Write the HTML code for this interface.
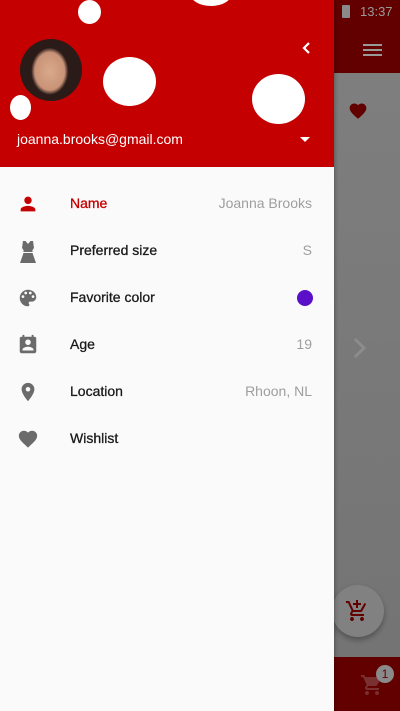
<!DOCTYPE html>
<html><head><style>
*{margin:0;padding:0;box-sizing:border-box}
body{width:400px;height:711px;overflow:hidden;position:relative;font-family:"Liberation Sans",Roboto,sans-serif;background:#7a7a7a}
.abs{position:absolute}
.dot{position:absolute;background:#fff;border-radius:50%}
.row{position:absolute;left:0;width:334px;height:47px}
.row .lbl{position:absolute;left:70px;top:-1px;line-height:20px;font-size:14px;color:#1a1a1a;font-weight:normal;-webkit-text-stroke:0.3px #1a1a1a}
.row .val{position:absolute;right:22px;top:-1px;line-height:20px;font-size:14px;color:#9e9e9e}
.row svg{position:absolute;left:17px;top:-1px}
</style></head><body>
<div class="abs" style="left:334px;top:0;width:66px;height:73px;background:#620000"></div>
<div class="abs" style="left:334px;top:73px;width:66px;height:584px;background:linear-gradient(#7e7e7e,#747474)"></div>
<div class="abs" style="left:334px;top:657px;width:66px;height:54px;background:#620000"></div>
<div class="abs" style="left:342px;top:5px;width:8px;height:13px;background:#8a8a8a;border-radius:1px"></div>
<div class="abs" style="left:360px;top:4px;font-size:13px;color:#9a9a9a">13:37</div>
<div class="abs" style="left:363px;top:44px;width:19px;height:2px;background:#999;box-shadow:0 5px 0 #999,0 10px 0 #999"></div>
<svg class="abs" style="left:347px;top:101px" width="22" height="20" viewBox="0 0 24 24"><path fill="#620000" d="M12 21.35l-1.45-1.32C5.4 15.36 2 12.28 2 8.5 2 5.42 4.42 3 7.5 3c1.74 0 3.41.81 4.5 2.09C13.09 3.81 14.76 3 16.5 3 19.58 3 22 5.42 22 8.5c0 3.78-3.4 6.86-8.55 11.54L12 21.35z"/></svg>
<svg class="abs" style="left:352px;top:337px" width="16" height="22" viewBox="0 0 16 22"><path d="M3 2l9 9-9 9" stroke="#8c8c8c" stroke-width="3" fill="none"/></svg>
<div class="abs" style="left:332px;top:585px;width:52px;height:52px;border-radius:50%;background:#818181;box-shadow:0 3px 6px rgba(0,0,0,.3)"></div>
<svg class="abs" style="left:345px;top:599px" width="24" height="24" viewBox="0 0 24 24"><path fill="#620000" d="M11 9h2V6h3V4h-3V1h-2v3H8v2h3v3zm-4 9c-1.1 0-1.99.9-1.99 2S5.9 22 7 22s2-.9 2-2-.9-2-2-2zm10 0c-1.1 0-1.99.9-1.99 2s.89 2 1.99 2 2-.9 2-2-.9-2-2-2zm-9.830-3.25l.03-.12.9-1.63h7.45c.75 0 1.41-.41 1.75-1.03l3.86-7.01L19.42 4h-.01l-1.1 2-2.76 5H8.53l-.13-.27L6.16 6l-.95-2-.94-2H1v2h2l3.6 7.59-1.35 2.45c-.16.28-.25.61-.25.96 0 1.1.9 2 2 2h12v-2H7.42c-.13 0-.25-.11-.25-.25z"/></svg>
<svg class="abs" style="left:360px;top:673px" width="24" height="24" viewBox="0 0 24 24"><path fill="#7a3030" d="M7 18c-1.1 0-1.99.9-1.99 2S5.9 22 7 22s2-.9 2-2-.9-2-2-2zM1 2v2h2l3.6 7.59-1.35 2.45c-.16.28-.25.61-.25.96 0 1.1.9 2 2 2h12v-2H7.42c-.14 0-.25-.11-.25-.25l.03-.12.9-1.630h7.45c.75 0 1.41-.41 1.75-1.03l3.58-6.49A1 1 0 0020 4H5.21l-.94-2H1zm16 16c-1.1 0-1.99.9-1.99 2s.89 2 1.990 2 2-.9 2-2-.9-2-2-2z"/></svg>
<div class="abs" style="left:376px;top:665px;width:18px;height:18px;border-radius:50%;background:#8a8a8a;color:#620000;font-size:12px;text-align:center;line-height:18px">1</div>

<div class="abs" style="left:0;top:0;width:334px;height:711px;background:#fafafa;box-shadow:1px 0 4px rgba(0,0,0,.3)"></div>
<div class="abs" style="left:0;top:0;width:334px;height:167px;background:#c40000;overflow:hidden">
 <div class="dot" style="left:78px;top:0;width:23px;height:24px"></div>
 <div class="dot" style="left:190px;top:-20px;width:42px;height:26px"></div>
 <div class="dot" style="left:103px;top:57px;width:53px;height:49px"></div>
 <div class="dot" style="left:252px;top:74px;width:53px;height:50px"></div>
 <div class="dot" style="left:10px;top:95px;width:21px;height:25px"></div>
 <div class="abs" style="left:20px;top:39px;width:62px;height:62px;border-radius:50%;background:radial-gradient(ellipse 30% 38% at 48% 52%,#d9a98a 0,#c99378 80%,#2a1a18 100%),radial-gradient(circle at 50% 50%,#2a1a18 0,#2a1a18 70%,#d8442a 85%)"></div>
 <svg class="abs" style="left:300px;top:41px" width="12" height="14" viewBox="0 0 12 14"><path d="M9 2L4 7l5 5" stroke="#fff" stroke-width="2.2" fill="none"/></svg>
 <div class="abs" style="left:17px;top:131px;font-size:14px;color:#fff">joanna.brooks@gmail.com</div>
 <div class="abs" style="left:300px;top:137px;width:0;height:0;border-left:5px solid transparent;border-right:5px solid transparent;border-top:5px solid #fff"></div>
</div>

<div class="row" style="top:194px"><svg width="22" height="22" viewBox="0 0 24 24"><path fill="#c40000" d="M12 12c2.2 0 4-1.8 4-4s-1.8-4-4-4-4 1.8-4 4 1.8 4 4 4zm0 2c-2.7 0-8 1.3-8 4v2h16v-2c0-2.7-5.3-4-8-4z"/></svg><span class="lbl" style="color:#c40000;-webkit-text-stroke:0.3px #c40000">Name</span><span class="val">Joanna Brooks</span></div>
<div class="row" style="top:241px"><svg width="22" height="24" viewBox="0 0 22 24"><path fill="#6b6b6b" d="M6 1h2.5l2.5 3 2.5-3H16l1 7-1.5 2v2h-9v-2L5 8zM6.5 13h9L19 23H3z"/></svg><span class="lbl">Preferred size</span><span class="val">S</span></div>
<div class="row" style="top:288px"><svg width="22" height="22" viewBox="0 0 24 24"><path fill="#6b6b6b" d="M12 3a9 9 0 000 18c.83 0 1.5-.67 1.5-1.5 0-.39-.15-.74-.39-1.01-.23-.26-.38-.61-.38-.99 0-.83.67-1.5 1.5-1.5H16c2.76 0 5-2.24 5-5 0-4.42-4.03-8-9-8zm-5.5 9a1.5 1.5 0 110-3 1.5 1.5 0 010 3zm3-4a1.5 1.5 0 110-3 1.5 1.5 0 010 3zm5 0a1.5 1.5 0 110-3 1.5 1.5 0 010 3zm3 4a1.5 1.5 0 110-3 1.5 1.5 0 010 3z"/></svg><span class="lbl">Favorite color</span><span class="abs" style="right:21px;top:2px;width:16px;height:16px;border-radius:50%;background:#5a0fc8"></span></div>
<div class="row" style="top:335px"><svg width="22" height="22" viewBox="0 0 24 24"><path fill="#6b6b6b" d="M19 3h-1V1h-2v2H8V1H6v2H5c-1.1 0-2 .9-2 2v14c0 1.1.9 2 2 2h14c1.1 0 2-.9 2-2V5c0-1.1-.9-2-2-2zm-7 3c1.66 0 3 1.34 3 3s-1.34 3-3 3-3-1.34-3-3 1.34-3 3-3zm6 12H6v-1c0-2 4-3.1 6-3.1s6 1.1 6 3.1v1z"/></svg><span class="lbl">Age</span><span class="val">19</span></div>
<div class="row" style="top:382px"><svg width="22" height="22" viewBox="0 0 24 24"><path fill="#6b6b6b" d="M12 2C8.13 2 5 5.13 5 9c0 5.25 7 13 7 13s7-7.75 7-13c0-3.87-3.13-7-7-7zm0 9.5a2.5 2.5 0 010-5 2.5 2.5 0 010 5z"/></svg><span class="lbl">Location</span><span class="val">Rhoon, NL</span></div>
<div class="row" style="top:429px"><svg width="22" height="22" viewBox="0 0 24 24"><path fill="#6b6b6b" d="M12 21.35l-1.45-1.32C5.4 15.36 2 12.28 2 8.5 2 5.42 4.42 3 7.5 3c1.74 0 3.41.81 4.5 2.09C13.09 3.81 14.76 3 16.5 3 19.58 3 22 5.42 22 8.5c0 3.78-3.4 6.86-8.55 11.54L12 21.35z"/></svg><span class="lbl">Wishlist</span></div>
</body></html>
